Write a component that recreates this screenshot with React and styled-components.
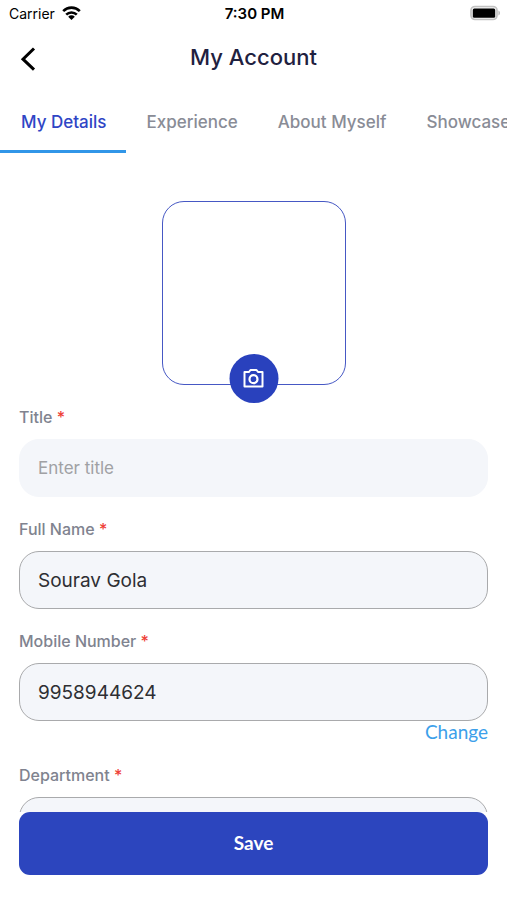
import * as React from 'react';
import styled, { createGlobalStyle } from 'styled-components';

const tabs = ['My Details', 'Experience', 'About Myself', 'Showcase'];

const BatteryIcon = () => (
  <svg width="30" height="16" viewBox="0 0 30 16" role="img" aria-label="Battery full">
    <rect x="1" y="1.500" width="26" height="13" rx="4" fill="#f4f4f4" stroke="#c2c2c2" strokeWidth="1.700" />
    <rect x="2.800" y="3.500" width="22.400" height="9.200" rx="1.500" fill="#000" />
    <path d="M28.400 5.600c1.200.5 1.600 1.400 1.600 2.400s-.4 1.900-1.600 2.400z" fill="#bdbdbd" />
  </svg>
);

const WifiIcon = () => (
  <svg width="19" height="14" viewBox="0 0 19 14" role="img" aria-label="Wi-Fi">
    <g fill="none" stroke="#000" strokeWidth="2.600">
      <path d="M1.200 5.100a11.700 11.700 0 0 1 16.600 0" />
      <path d="M4.200 8.700a7.500 7.500 0 0 1 10.600 0" />
    </g>
    <path d="M9.500 14 6.200 10.700a4.600 4.600 0 0 1 6.600 0z" />
  </svg>
);

const BackIcon = () => (
  <svg width="16" height="26" viewBox="0 0 16 26" aria-hidden="true">
    <path d="M14 2.500 3 13.200l11 10.500" fill="none" stroke="#000" strokeWidth="3" />
  </svg>
);

const CameraIcon = () => (
  <svg width="24" height="24" viewBox="0 0 24 24" fill="none" stroke="#fff" strokeWidth="2" aria-hidden="true">
    <path d="M3 5h4.500L9 3h6l1.500 2H21v14.500H3z" strokeLinejoin="round" />
    <circle cx="12" cy="12.200" r="4" strokeWidth="2.200" />
  </svg>
);

function Field({ id, label, children, ...inputProps }) {
  return (
    <FieldGroup>
      <Label htmlFor={id}>
        {label} <Required>*</Required>
      </Label>
      <Input id={id} required {...inputProps} />
      {children}
    </FieldGroup>
  );
}

export default function App() {
  const [active, setActive] = React.useState(tabs[0]);

  return (
    <Screen>
      <GlobalStyle />
      <StatusBar>
        <Carrier>
          Carrier <WifiIcon />
        </Carrier>
        <Time>7:30 PM</Time>
        <Battery>
          <BatteryIcon />
        </Battery>
      </StatusBar>
      <Header>
        <BackButton type="button" aria-label="Back">
          <BackIcon />
        </BackButton>
        <Heading>My Account</Heading>
      </Header>
      <Tabs role="tablist">
        {tabs.map((tab) => (
          <Tab key={tab} type="button" role="tab" aria-selected={tab === active} $active={tab === active} onClick={() => setActive(tab)}>
            {tab}
          </Tab>
        ))}
      </Tabs>
      <Form id="details" onSubmit={(e) => e.preventDefault()}>
        <Photo>
          <PhotoButton type="button" aria-label="Upload photo">
            <CameraIcon />
          </PhotoButton>
        </Photo>
        <Field id="title" label="Title" placeholder="Enter title" $plain />
        <Field id="name" label="Full Name" defaultValue="Sourav Gola" />
        <Field id="mobile" label="Mobile Number" type="tel" defaultValue="9958944624">
          <ChangeLink href="#mobile">Change</ChangeLink>
        </Field>
        <Field id="department" label="Department" />
      </Form>
      <Footer>
        <SaveButton type="submit" form="details">
          Save
        </SaveButton>
      </Footer>
    </Screen>
  );
}

const GlobalStyle = createGlobalStyle`
  * {
    box-sizing: border-box;
  }

  body {
    margin: 0;
    background: #fff;
    font-family: Inter, 'Liberation Sans', sans-serif;
  }

  button,
  input {
    font-family: inherit;
  }
`;

const Screen = styled.div`
  display: flex;
  flex-direction: column;
  height: 100vh;
  overflow: hidden;
`;

const StatusBar = styled.div`
  display: grid;
  grid-template-columns: 1fr auto 1fr;
  align-items: center;
  flex: none;
  height: 26px;
  padding: 0 7px 0 9px;
  font-size: 14px;
`;

const Carrier = styled.div`
  display: flex;
  align-items: center;
  gap: 7px;
`;

const Time = styled.div`
  font-size: 15px;
  font-weight: 600;
`;

const Battery = styled.div`
  display: flex;
  justify-content: flex-end;
`;

const Header = styled.header`
  display: grid;
  grid-template-columns: 40px 1fr 40px;
  align-items: center;
  flex: none;
  height: 64px;
  padding: 0 8px;
`;

const BackButton = styled.button`
  display: flex;
  align-items: center;
  justify-content: center;
  height: 40px;
  padding: 2px 0 0;
  border: 0;
  background: none;
`;

const Heading = styled.h1`
  margin: 0;
  padding-bottom: 2px;
  color: #1f2140;
  font-size: 22px;
  font-weight: 500;
  line-height: 28px;
  text-align: center;
`;

const Tabs = styled.div`
  display: flex;
  flex: none;
  height: 63px;
  overflow: hidden;
`;

const Tab = styled.button`
  flex: none;
  padding: 4px 20px 0;
  border: 0;
  border-bottom: 3px solid ${(props) => (props.$active ? '#3196e8' : 'transparent')};
  background: none;
  color: ${(props) => (props.$active ? '#2f45c5' : '#898c96')};
  font-size: 17px;
  font-weight: 500;

  &:first-child {
    padding-left: 21px;
  }
`;

const Form = styled.form`
  display: flex;
  flex: 1;
  flex-direction: column;
  min-height: 0;
  padding: 48px 19px 0;
  overflow-y: auto;
  scrollbar-width: none;
`;

const Photo = styled.div`
  position: relative;
  flex: none;
  align-self: center;
  width: 184px;
  height: 184px;
  margin-bottom: 20px;
  border: 1px solid #4658c4;
  border-radius: 22px;
`;

const PhotoButton = styled.button`
  position: absolute;
  bottom: -19px;
  left: 50%;
  display: flex;
  align-items: center;
  justify-content: center;
  width: 49px;
  height: 49px;
  padding: 0;
  border: 0;
  border-radius: 50%;
  background: #2941bd;
  transform: translateX(-50%);
`;

const FieldGroup = styled.div`
  display: flex;
  flex: none;
  flex-direction: column;
  margin-bottom: 20px;
`;

const Label = styled.label`
  margin-bottom: 10px;
  color: #80838f;
  font-size: 16px;
  font-weight: 500;
  line-height: 24px;
`;

const Required = styled.span`
  color: #ee4036;
`;

const Input = styled.input`
  width: 100%;
  height: 58px;
  padding: 0 18px;
  border: 1px solid ${(props) => (props.$plain ? '#f4f6fa' : '#a9aaac')};
  border-radius: 20px;
  outline: 0;
  background: #f4f6fa;
  color: #2e2f33;
  font-size: ${(props) => (props.$plain ? '17px' : '19px')};

  &::placeholder {
    color: #a0a1a4;
    opacity: 1;
  }
`;

const ChangeLink = styled.a`
  align-self: flex-end;
  color: #3ca0ea;
  font-family: Lato, sans-serif;
  font-size: 19px;
  line-height: 22px;
  text-decoration: none;
`;

const Footer = styled.footer`
  flex: none;
  padding: 0 19px 25px;
  background: #fff;
`;

const SaveButton = styled.button`
  width: 100%;
  height: 63px;
  padding: 0 0 2px;
  border: 0;
  border-radius: 11px;
  background: #2c45be;
  color: #fff;
  font-family: Lato, sans-serif;
  font-size: 19px;
  font-weight: 700;
`;
